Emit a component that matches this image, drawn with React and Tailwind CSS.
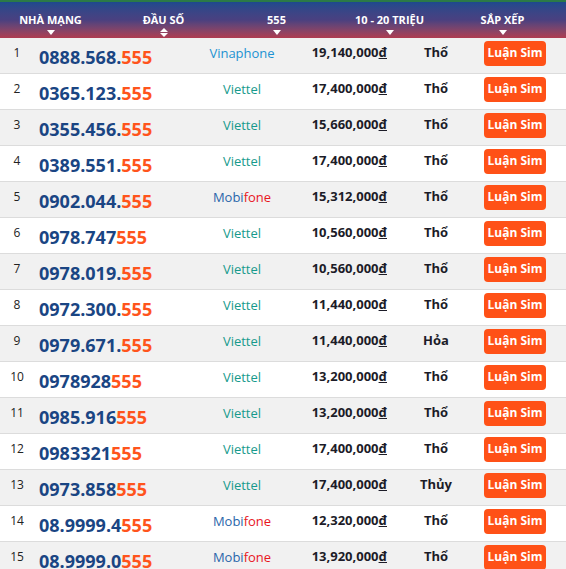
// App.jsx
const rows = [
  ["0888.568.", "Vinaphone", "19,140,000", "Thổ"],
  ["0365.123.", "Viettel", "17,400,000", "Thổ"],
  ["0355.456.", "Viettel", "15,660,000", "Thổ"],
  ["0389.551.", "Viettel", "17,400,000", "Thổ"],
  ["0902.044.", "Mobifone", "15,312,000", "Thổ"],
  ["0978.747", "Viettel", "10,560,000", "Thổ"],
  ["0978.019.", "Viettel", "10,560,000", "Thổ"],
  ["0972.300.", "Viettel", "11,440,000", "Thổ"],
  ["0979.671.", "Viettel", "11,440,000", "Hỏa"],
  ["0978928", "Viettel", "13,200,000", "Thổ"],
  ["0985.916", "Viettel", "13,200,000", "Thổ"],
  ["0983321", "Viettel", "17,400,000", "Thổ"],
  ["0973.858", "Viettel", "17,400,000", "Thủy"],
  ["08.9999.4", "Mobifone", "12,320,000", "Thổ"],
  ["08.9999.0", "Mobifone", "13,920,000", "Thổ"],
];

function Down() {
  return (
    <svg width="8" height="5" viewBox="0 0 8 5" className="mt-[3px]">
      <path d="M0 0h8L4 5z" fill="#fff" />
    </svg>
  );
}

function Both() {
  return (
    <svg width="8" height="9" viewBox="0 0 8 9" className="mt-[1px]">
      <path d="M0 4L4 0l4 4zM0 5h8L4 9z" fill="#fff" />
    </svg>
  );
}

function Provider({ name }) {
  if (name === "Mobifone")
    return (
      <span>
        <span className="text-[#2a66aa]">Mobi</span>
        <span className="text-[#e8161e]">fone</span>
      </span>
    );
  if (name === "Vinaphone") return <span className="text-[#1c92d2]">Vinaphone</span>;
  return <span className="text-[#169a8c]">Viettel</span>;
}

export default function App() {
  return (
    <div className="w-[566px] h-[569px] overflow-hidden bg-white font-['Open_Sans',sans-serif]">
      {/* header */}
      <div className="h-[2px] bg-[#2b7a47]" />
      <div className="h-[36px] flex bg-gradient-to-b from-[#1d4a8d] via-[#4a4080] to-[#b03b50] text-white text-[11px] font-bold">
        {[
          ["NHÀ MẠNG", <Down />],
          ["ĐẦU SỐ", <Both />],
          ["555", <Down />],
          ["10 - 20 TRIỆU", <Down />],
          ["SẮP XẾP", <Down />],
        ].map(([t, ic], i) => (
          <div key={i} className="w-[113px] pr-3 pt-[11px] flex flex-col items-center leading-[14px]">
            <span>{t}</span>
            {ic}
          </div>
        ))}
      </div>

      {/* rows */}
      {rows.map(([num, prov, price, el], i) => (
        <div
          key={i}
          className={`h-[36px] flex items-center border-b border-[#dcdcdc] ${i % 2 === 0 ? "bg-[#f1f1f1]" : "bg-white"}`}
        >
          <div className="w-[34px] text-center text-[12px] text-[#222] -mt-[6px]">{i + 1}</div>
          <div className="w-[156px] pl-[5px] pt-[3px] text-[18px] font-bold text-[#1a4583]">
            {num}
            <span className="text-[#ff541c]">555</span>
          </div>
          <div className="w-[104px] text-center text-[13px] -mt-[3px]">
            <Provider name={prov} />
          </div>
          <div className="w-[101px] text-right pr-[8px] text-[13px] font-bold text-[#1c1c28] -mt-[5px]">
            {price}
            <u>đ</u>
          </div>
          <div className="w-[82px] text-center text-[13px] font-bold text-[#1c1c28] -mt-[5px]">{el}</div>
          <div className="flex-1 pl-[7px] -mt-[6px]">
            <button className="w-[62px] h-[25px] rounded-[4px] bg-[#ff5117] text-white text-[12px] font-bold">
              Luận Sim
            </button>
          </div>
        </div>
      ))}
    </div>
  );
}
